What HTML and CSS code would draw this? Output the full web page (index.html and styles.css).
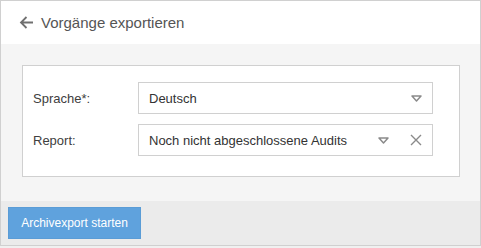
FILE: index.html
```html
<!DOCTYPE html>
<html lang="de">
<head>
<meta charset="utf-8">
<title>Vorgänge exportieren</title>
<link rel="stylesheet" href="styles.css">
</head>
<body>
<div class="window">
  <div class="header">
    <svg class="back" width="15" height="13" viewBox="0 0 15 13"><path d="M14 6.5H2M7.5 1L2 6.5L7.5 12" fill="none" stroke="#707070" stroke-width="1.8"/></svg>
    <span class="title">Vorgänge exportieren</span>
  </div>
  <div class="content">
    <div class="card">
      <div class="row">
        <label class="label">Sprache*:</label>
        <div class="select">
          <span class="value">Deutsch</span>
          <svg class="tri" width="11" height="7" viewBox="0 0 11 7"><path d="M1 1H10L5.5 6Z" fill="none" stroke="#8a8a8a" stroke-width="1.5" stroke-linejoin="round"/></svg>
        </div>
      </div>
      <div class="row">
        <label class="label">Report:</label>
        <div class="select">
          <span class="value">Noch nicht abgeschlossene Audits</span>
          <svg class="tri" width="11" height="7" viewBox="0 0 11 7"><path d="M1 1H10L5.5 6Z" fill="none" stroke="#8a8a8a" stroke-width="1.5" stroke-linejoin="round"/></svg>
          <svg class="clear" width="12" height="12" viewBox="0 0 12 12"><path d="M1 1L11 11M11 1L1 11" stroke="#8a8a8a" stroke-width="1.4"/></svg>
        </div>
      </div>
    </div>
  </div>
  <div class="footer">
    <button class="btn">Archivexport starten</button>
  </div>
</div>
</body>
</html>
```

FILE: styles.css
```css
html, body {
  margin: 0;
  padding: 0;
  background: #f0f0f0;
}
body {
  font-family: "Liberation Sans", Arial, sans-serif;
}
.window {
  width: 481px;
  height: 246px;
  box-sizing: border-box;
  border: 1px solid #d0d0d0;
  display: flex;
  flex-direction: column;
  background: #f5f5f5;
}
.header {
  height: 43px;
  background: #fff;
  display: flex;
  align-items: center;
  padding-left: 18px;
  flex: none;
}
.back {
  display: block;
  margin-right: 7px;
  margin-top: -1px;
}
.title {
  font-size: 15px;
  color: #555;
}
.content {
  flex: 1;
  padding: 21px 20px 24px 21px;
  background: #f5f5f5;
}
.card {
  background: #fff;
  border: 1px solid #d0d0d0;
  padding: 16px 26px 20px 10px;
  display: flex;
  flex-direction: column;
  gap: 10px;
}
.row {
  display: flex;
  align-items: center;
}
.label {
  width: 105px;
  font-size: 13px;
  color: #404040;
}
.select {
  flex: 1;
  height: 32px;
  box-sizing: border-box;
  border: 1px solid #d0d0d0;
  display: flex;
  align-items: center;
  padding: 0 10px 0 10px;
}
.value {
  flex: 1;
  font-size: 13px;
  color: #333;
}
.tri {
  display: block;
}
.clear {
  display: block;
  margin-left: 21px;
}
.footer {
  height: 44px;
  flex: none;
  background: #ebebeb;
  padding: 6px 7px;
  box-sizing: border-box;
}
.btn {
  display: block;
  width: 133px;
  height: 32px;
  border: 1px solid #5a9cd6;
  background: #5fa2dd;
  color: #fff;
  font-family: "Liberation Sans", Arial, sans-serif;
  font-size: 12px;
  padding: 0;
}
```
